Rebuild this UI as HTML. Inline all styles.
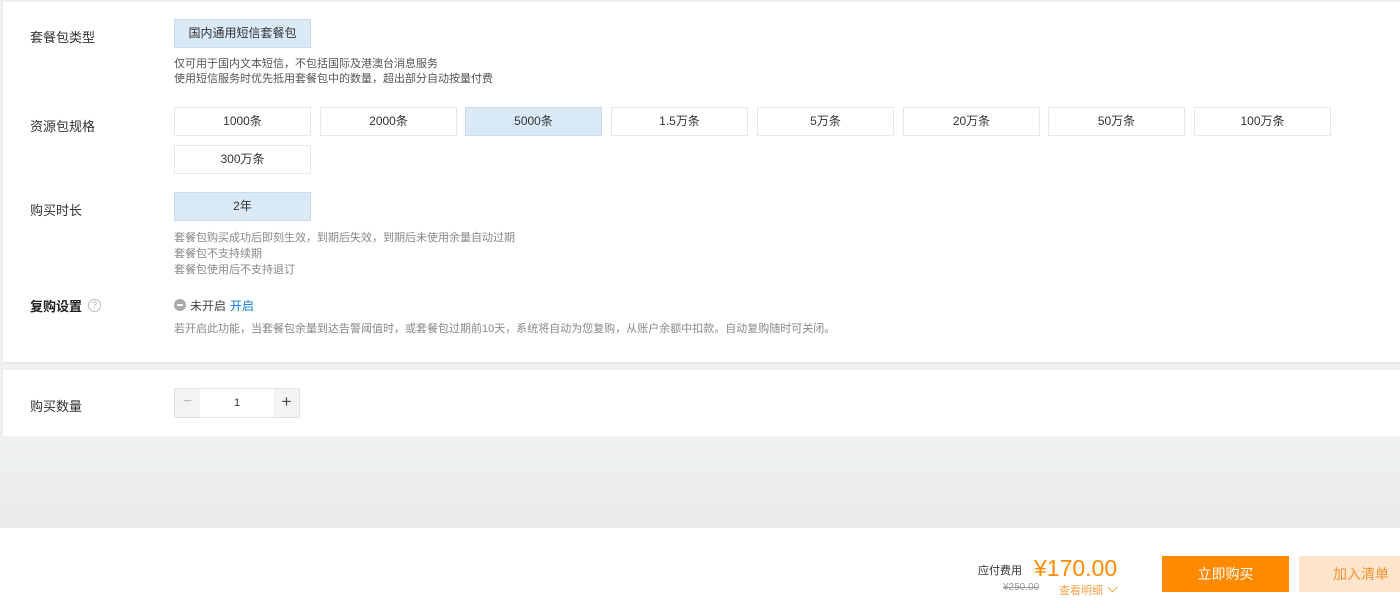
<!DOCTYPE html>
<html><head><meta charset="utf-8"><style>
*{margin:0;padding:0;box-sizing:border-box}
body{width:1400px;height:608px;overflow:hidden;background:#eff0f2;font-family:"Liberation Sans","Noto Sans CJK SC",sans-serif;position:relative;color:#333}
.p{position:absolute;background:#fff}
.a{position:absolute;white-space:nowrap}
.lab{font-size:13px;color:#333;left:30px}
.b{position:absolute;width:137px;height:29px;border:1px solid #e8e8e8;background:#fff;font-size:12px;color:#333;text-align:center;line-height:27px}
.s{background:#d9e9f6;border-color:#c6dcee}
.t{font-size:11px;color:#555;line-height:15px}
.g{font-size:11px;color:#888;line-height:16px}
</style></head><body>
<div class="p" style="left:3px;top:2px;width:1397px;height:360px;box-shadow:0 1px 3px rgba(0,0,0,.06)"></div>
<div class="p" style="left:3px;top:370px;width:1397px;height:66px;box-shadow:0 1px 3px rgba(0,0,0,.06)"></div>
<div class="a" style="left:0;top:436px;width:1400px;height:92px;background:linear-gradient(#eff2f3,#e8e9eb)"></div>
<div class="p" style="left:0;top:528px;width:1400px;height:80px"></div>

<div class="a lab" style="top:27px">套餐包类型</div>
<div class="b s" style="left:174px;top:19px">国内通用短信套餐包</div>
<div class="a t" style="left:174px;top:57px">仅可用于国内文本短信，不包括国际及港澳台消息服务<br>使用短信服务时优先抵用套餐包中的数量，超出部分自动按量付费</div>

<div class="a lab" style="top:116px">资源包规格</div>
<div class="b" style="left:174px;top:107px">1000条</div>
<div class="b" style="left:320px;top:107px">2000条</div>
<div class="b s" style="left:465px;top:107px">5000条</div>
<div class="b" style="left:611px;top:107px">1.5万条</div>
<div class="b" style="left:757px;top:107px">5万条</div>
<div class="b" style="left:903px;top:107px">20万条</div>
<div class="b" style="left:1048px;top:107px">50万条</div>
<div class="b" style="left:1194px;top:107px">100万条</div>
<div class="b" style="left:174px;top:145px">300万条</div>

<div class="a lab" style="top:200px">购买时长</div>
<div class="b s" style="left:174px;top:192px">2年</div>
<div class="a g" style="left:174px;top:230px">套餐包购买成功后即刻生效，到期后失效，到期后未使用余量自动过期<br>套餐包不支持续期<br>套餐包使用后不支持退订</div>

<div class="a lab" style="top:296px;font-weight:bold;color:#222">复购设置</div>
<div class="a" style="left:88px;top:299px;width:13px;height:13px;border:1px solid #bbb;border-radius:50%;font-size:9px;color:#aaa;text-align:center;line-height:11px">?</div>
<div class="a" style="left:174px;top:299px;width:12px;height:12px;border-radius:50%;background:#aaa"><div style="position:absolute;left:3px;top:5px;width:6px;height:2px;background:#fff"></div></div>
<div class="a" style="left:190px;top:297px;font-size:12px;color:#444">未开启</div>
<div class="a" style="left:230px;top:297px;font-size:12px;color:#0a7ad6">开启</div>
<div class="a g" style="left:174px;top:321px">若开启此功能，当套餐包余量到达告警阈值时，或套餐包过期前10天，系统将自动为您复购，从账户余额中扣款。自动复购随时可关闭。</div>

<div class="a lab" style="top:396px">购买数量</div>
<div class="a" style="left:174px;top:388px;width:126px;height:30px;border:1px solid #e3e3e3;background:#fff">
<div style="position:absolute;left:0;top:0;width:25px;height:28px;background:#f3f3f3;color:#bbb;text-align:center;line-height:26px;font-size:16px">−</div>
<div style="position:absolute;left:25px;top:0;width:74px;height:28px;text-align:center;line-height:28px;font-size:11px;color:#333">1</div>
<div style="position:absolute;left:99px;top:0;width:25px;height:28px;background:#f3f3f3;color:#444;text-align:center;line-height:26px;font-size:17px">+</div>
</div>

<div class="a" style="left:978px;top:562px;font-size:11px;color:#333">应付费用</div>
<div class="a" style="left:1034px;top:553px;font-size:23px;color:#ff8a00;line-height:30px">¥170.00</div>
<div class="a" style="left:1003px;top:582px;font-size:10px;color:#999;text-decoration:line-through">¥250.00</div>
<div class="a" style="left:1059px;top:582px;font-size:11px;color:#f5a34a">查看明细 <span style="display:inline-block;width:7px;height:7px;border-right:1px solid #f5a34a;border-bottom:1px solid #f5a34a;transform:rotate(45deg);margin-left:3px;position:relative;top:-3px"></span></div>
<div class="a" style="left:1162px;top:556px;width:127px;height:36px;background:#ff8a00;color:#fff;font-size:14px;text-align:center;line-height:36px">立即购买</div>
<div class="a" style="left:1299px;top:556px;width:101px;height:36px;background:#fde5cc;color:#f59231;font-size:14px;line-height:36px;padding-left:34px">加入清单</div>
</body></html>
